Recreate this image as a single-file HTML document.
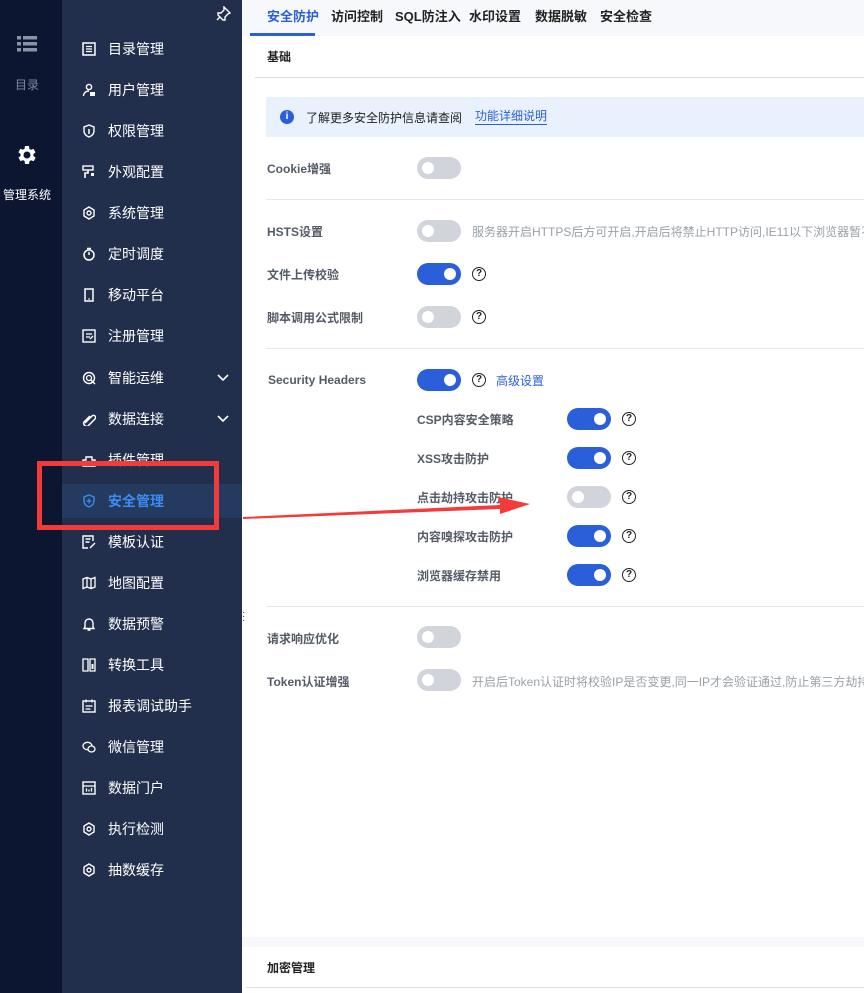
<!DOCTYPE html>
<html><head><meta charset="utf-8"><style>
*{margin:0;padding:0;box-sizing:border-box}
body{width:864px;height:993px;position:relative;overflow:hidden;background:#fff;font-family:"Liberation Sans","Noto Sans CJK SC",sans-serif;}
.a{position:absolute;white-space:nowrap}
#rail{left:0;top:0;width:62px;height:993px;background:#0c1631}
#side{left:62px;top:0;width:180px;height:993px;background:#222f4c}
.mi{position:absolute;left:62px;width:180px;height:34px;color:#fff;font-size:14px;line-height:34px}
.mi span{position:absolute;left:46px}
.mi svg{position:absolute;left:20px;top:10px}
.tab{position:absolute;top:0;height:34px;line-height:34px;font-size:13px;font-weight:bold;color:#222;white-space:nowrap}
.lbl{position:absolute;font-size:12px;font-weight:bold;color:#555b66;line-height:16px;white-space:nowrap}
.sw{position:absolute;width:44px;height:22px;border-radius:11px;background:#d1d4da}
.sw:after{content:"";position:absolute;left:5px;top:5px;width:12px;height:12px;border-radius:50%;background:#fff}
.sw.on{background:#2b5fd9}
.sw.on:after{left:27px}
.q{position:absolute;width:14px;height:14px;border:1.3px solid #222;border-radius:50%;font-size:10px;font-weight:bold;line-height:12px;text-align:center;color:#222}
.hr{position:absolute;height:1px;background:#e6e8ee}
.desc{position:absolute;font-size:12px;color:#9aa0a8;line-height:16px;white-space:nowrap;overflow:hidden;right:0}
</style></head><body>
<div class="a" id="rail"></div>
<div class="a" id="side"></div>
<svg class="a" style="left:17px;top:36px" width="20" height="16"><g fill="#8a93a6"><rect x="0" y="0" width="4" height="3.5"/><rect x="6" y="0" width="14" height="3.5"/><rect x="0" y="6" width="4" height="3.5"/><rect x="6" y="6" width="14" height="3.5"/><rect x="0" y="12" width="4" height="3.5"/><rect x="6" y="12" width="14" height="3.5"/></g></svg>
<div class="a" style="left:15px;top:76px;font-size:12px;color:#7e879a">目录</div>
<svg class="a" style="left:15px;top:143px" width="24" height="24" viewBox="0 0 24 24"><path fill="#fff" fill-rule="evenodd" d="M19.4 13a7.5 7.5 0 000-2l2.1-1.6-2-3.5-2.5 1a7 7 0 00-1.7-1L15 3h-4l-.4 2.7a7 7 0 00-1.7 1l-2.5-1-2 3.5L6.6 11a7.5 7.5 0 000 2l-2.1 1.6 2 3.5 2.5-1a7 7 0 001.7 1L11 21h4l.4-2.7a7 7 0 001.7-1l2.5 1 2-3.5zM13 15.5a3.5 3.5 0 110-7 3.5 3.5 0 010 7z" transform="translate(-1 0)"/></svg>
<div class="a" style="left:3px;top:186px;font-size:12px;color:#fff">管理系统</div>
<svg class="a" style="left:215px;top:6px" width="16" height="16" viewBox="0 0 16 16"><path d="M9 1l6 6-2 1-3 3 0 3-2 0-5-5 0-2 3 0 3-3zM2 14l3-3" stroke="#fff" stroke-width="1.4" fill="none"/></svg>
<div class="a" style="left:62px;top:484px;width:180px;height:34px;background:#243a5f"></div>

<div class="mi" style="top:32px"><svg width="14" height="14"><rect x="1" y="1" width="12" height="12" fill="none" stroke="#fff" stroke-width="1.5"/><path d="M4 4.5h6M4 7h6M4 9.5h6" stroke="#fff" stroke-width="1.3"/></svg><span>目录管理</span></div>
<div class="mi" style="top:73px"><svg width="14" height="14"><circle cx="7" cy="4" r="2.6" fill="none" stroke="#fff" stroke-width="1.4"/><path d="M1.5 13c0-3 2.5-5 5.5-5" stroke="#fff" stroke-width="1.4" fill="none"/><rect x="8" y="9" width="5" height="4" fill="#fff"/></svg><span>用户管理</span></div>
<div class="mi" style="top:114px"><svg width="14" height="14"><path d="M7 1l5 2v4c0 3-2.5 5-5 6-2.5-1-5-3-5-6V3z" fill="none" stroke="#fff" stroke-width="1.4"/><path d="M7 5v5" stroke="#fff" stroke-width="1.5"/></svg><span>权限管理</span></div>
<div class="mi" style="top:155px"><svg width="14" height="14"><rect x="1" y="1" width="10" height="4" fill="none" stroke="#fff" stroke-width="1.4"/><path d="M6 5v3H3v5" stroke="#fff" stroke-width="1.6" fill="none"/><rect x="9" y="8" width="3" height="3" fill="#fff"/></svg><span>外观配置</span></div>
<div class="mi" style="top:196px"><svg width="14" height="14" viewBox="0 0 14 14"><path d="M7 1l5 3v6l-5 3-5-3V4z" fill="none" stroke="#fff" stroke-width="1.4"/><circle cx="7" cy="7" r="2" fill="none" stroke="#fff" stroke-width="1.4"/></svg><span>系统管理</span></div>
<div class="mi" style="top:237px"><svg width="14" height="14"><circle cx="7" cy="8" r="5" fill="none" stroke="#fff" stroke-width="1.5"/><path d="M5 1.5h4M7 5v3" stroke="#fff" stroke-width="1.5"/></svg><span>定时调度</span></div>
<div class="mi" style="top:278px"><svg width="14" height="14"><rect x="3" y="1" width="8" height="12" fill="none" stroke="#fff" stroke-width="1.5"/><path d="M6 11h2" stroke="#fff"/></svg><span>移动平台</span></div>
<div class="mi" style="top:319px"><svg width="14" height="14"><rect x="1" y="1" width="12" height="12" fill="none" stroke="#fff" stroke-width="1.4"/><path d="M4 5h6M4 8h4M8 10l3-3" stroke="#fff" stroke-width="1.3"/></svg><span>注册管理</span></div>
<div class="mi" style="top:361px"><svg width="14" height="14"><circle cx="7" cy="7" r="5.5" fill="none" stroke="#fff" stroke-width="1.4"/><circle cx="7" cy="7" r="2.5" fill="none" stroke="#fff" stroke-width="1.3"/><path d="M9 9l4 4" stroke="#fff" stroke-width="1.5"/></svg><span>智能运维</span><svg style="left:154px;top:12px" width="14" height="10"><path d="M2 2l5 5 5-5" stroke="#fff" stroke-width="1.6" fill="none"/></svg></div>
<div class="mi" style="top:402px"><svg width="14" height="14"><path d="M3 11l7-7a2 2 0 013 3l-7 7a3 3 0 01-4-4l6-6" stroke="#fff" stroke-width="1.5" fill="none"/></svg><span>数据连接</span><svg style="left:154px;top:12px" width="14" height="10"><path d="M2 2l5 5 5-5" stroke="#fff" stroke-width="1.6" fill="none"/></svg></div>
<div class="mi" style="top:443px"><svg width="14" height="14"><path d="M4 4h6v3h3v6H1V7h3z" fill="none" stroke="#fff" stroke-width="1.4"/></svg><span>插件管理</span></div>
<div class="mi" style="top:484px;color:#3d8bf2"><svg width="14" height="14"><path d="M7 1l5 2v4c0 3-2.5 5-5 6-2.5-1-5-3-5-6V3z" fill="none" stroke="#3d8bf2" stroke-width="1.4"/><path d="M7 4.5v5M4.5 7h5" stroke="#3d8bf2" stroke-width="1.3"/></svg><span style="font-weight:bold">安全管理</span></div>
<div class="mi" style="top:525px"><svg width="14" height="14"><path d="M11 6V1H1v12h5" fill="none" stroke="#fff" stroke-width="1.4"/><path d="M3.5 4h5M3.5 7h4M8 13l5-5" stroke="#fff" stroke-width="1.4"/></svg><span>模板认证</span></div>
<div class="mi" style="top:566px"><svg width="14" height="14"><path d="M1 3l4-1.5 4 1.5 4-1.5V11l-4 1.5-4-1.5-4 1.5zM5 1.5V11M9 3v9.5" fill="none" stroke="#fff" stroke-width="1.3"/></svg><span>地图配置</span></div>
<div class="mi" style="top:607px"><svg width="14" height="14"><path d="M3 10V6a4 4 0 018 0v4l1 1.5H2zM5.5 13h3" fill="none" stroke="#fff" stroke-width="1.4"/></svg><span>数据预警</span></div>
<div class="mi" style="top:648px"><svg width="14" height="14"><path d="M1 1h5v12H1zM8 1h5v12H8z" fill="none" stroke="#fff" stroke-width="1.3"/><path d="M9.5 6h2v5h-2z" fill="#fff"/></svg><span>转换工具</span></div>
<div class="mi" style="top:689px"><svg width="14" height="14"><rect x="1" y="2" width="12" height="11" fill="none" stroke="#fff" stroke-width="1.4"/><path d="M4 0.5v3M10 0.5v3M3.5 7h7M3.5 10h5" stroke="#fff" stroke-width="1.3"/></svg><span>报表调试助手</span></div>
<div class="mi" style="top:730px"><svg width="14" height="14"><ellipse cx="5.5" cy="6" rx="4.5" ry="3.7" fill="none" stroke="#fff" stroke-width="1.3"/><ellipse cx="9.5" cy="9" rx="3.5" ry="3" fill="#222f4c" stroke="#fff" stroke-width="1.3"/></svg><span>微信管理</span></div>
<div class="mi" style="top:771px"><svg width="14" height="14"><rect x="1" y="1" width="12" height="12" fill="none" stroke="#fff" stroke-width="1.4"/><path d="M1 5h12M4.5 7.5v3M7 8.5v2M9.5 7v3.5" stroke="#fff" stroke-width="1.3"/></svg><span>数据门户</span></div>
<div class="mi" style="top:812px"><svg width="14" height="14"><path d="M7 1l5 3v6l-5 3-5-3V4z" fill="none" stroke="#fff" stroke-width="1.4"/><circle cx="7" cy="7" r="2" fill="none" stroke="#fff" stroke-width="1.4"/></svg><span>执行检测</span></div>
<div class="mi" style="top:853px"><svg width="14" height="14"><path d="M7 1l5 3v6l-5 3-5-3V4z" fill="none" stroke="#fff" stroke-width="1.4"/><circle cx="7" cy="7" r="2" fill="none" stroke="#fff" stroke-width="1.4"/></svg><span>抽数缓存</span></div>
<div class="a" style="left:242px;top:611px;font-size:10px;color:#333;line-height:4px">·<br>·<br>·</div>

<div class="a" style="left:242px;top:0;width:622px;height:36px;background:#f6f8fb"></div>
<div class="tab" style="left:267px;color:#2b5fd9">安全防护</div>
<div class="a" style="left:250px;top:33px;width:65px;height:3px;background:#2b5fd9"></div>
<div class="tab" style="left:331px">访问控制</div>
<div class="tab" style="left:395px">SQL防注入</div>
<div class="tab" style="left:469px">水印设置</div>
<div class="tab" style="left:535px">数据脱敏</div>
<div class="tab" style="left:600px">安全检查</div>
<div class="a" style="left:267px;top:48px;font-size:12px;font-weight:bold;color:#222">基础</div>
<div class="hr" style="left:255px;top:77px;width:609px;background:#dcdee3"></div>
<div class="a" style="left:266px;top:97px;width:598px;height:40px;background:#e9f1fc"></div>
<div class="a" style="left:280px;top:110px;width:14px;height:14px;border-radius:50%;background:#2b5fd9;color:#fff;font-size:10px;font-weight:bold;text-align:center;line-height:14px">i</div>
<div class="a" style="left:306px;top:109px;font-size:12px;color:#222">了解更多安全防护信息请查阅</div>
<div class="a" style="left:475px;top:109px;font-size:12px;color:#2b5fd9;border-bottom:1px solid #2b5fd9;line-height:15px">功能详细说明</div>

<div class="lbl" style="left:267px;top:161px">Cookie增强</div><div class="sw" style="left:417px;top:157px"></div>
<div class="hr" style="left:266px;top:199px;width:598px"></div>
<div class="lbl" style="left:267px;top:224px">HSTS设置</div><div class="sw" style="left:417px;top:220px"></div>
<div class="desc" style="left:472px;top:224px">服务器开启HTTPS后方可开启,开启后将禁止HTTP访问,IE11以下浏览器暂不</div>
<div class="lbl" style="left:267px;top:267px">文件上传校验</div><div class="sw on" style="left:417px;top:263px"></div><div class="q" style="left:472px;top:267px">?</div>
<div class="lbl" style="left:267px;top:310px">脚本调用公式限制</div><div class="sw" style="left:417px;top:306px"></div><div class="q" style="left:472px;top:310px">?</div>
<div class="hr" style="left:266px;top:348px;width:598px"></div>
<div class="lbl" style="left:268px;top:372px">Security Headers</div><div class="sw on" style="left:417px;top:369px"></div><div class="q" style="left:472px;top:373px">?</div>
<div class="a" style="left:496px;top:372px;font-size:12px;color:#2b5fd9">高级设置</div>
<div class="lbl" style="left:417px;top:412px">CSP内容安全策略</div><div class="sw on" style="left:567px;top:408px"></div><div class="q" style="left:622px;top:412px">?</div>
<div class="lbl" style="left:417px;top:451px">XSS攻击防护</div><div class="sw on" style="left:567px;top:447px"></div><div class="q" style="left:622px;top:451px">?</div>
<div class="lbl" style="left:417px;top:490px">点击劫持攻击防护</div><div class="sw" style="left:567px;top:486px"></div><div class="q" style="left:622px;top:490px">?</div>
<div class="lbl" style="left:417px;top:529px">内容嗅探攻击防护</div><div class="sw on" style="left:567px;top:525px"></div><div class="q" style="left:622px;top:529px">?</div>
<div class="lbl" style="left:417px;top:568px">浏览器缓存禁用</div><div class="sw on" style="left:567px;top:564px"></div><div class="q" style="left:622px;top:568px">?</div>
<div class="hr" style="left:266px;top:606px;width:598px"></div>
<div class="lbl" style="left:267px;top:631px">请求响应优化</div><div class="sw" style="left:417px;top:626px"></div>
<div class="lbl" style="left:267px;top:674px">Token认证增强</div><div class="sw" style="left:417px;top:669px"></div>
<div class="desc" style="left:472px;top:674px">开启后Token认证时将校验IP是否变更,同一IP才会验证通过,防止第三方劫持</div>

<div class="a" style="left:242px;top:937px;width:622px;height:10px;background:#f6f8fb"></div>
<div class="a" style="left:267px;top:959px;font-size:12px;font-weight:bold;color:#222">加密管理</div>
<div class="hr" style="left:246px;top:987px;width:618px;background:#dcdee3"></div>

<div class="a" style="left:37px;top:461px;width:182px;height:69px;border:5px solid #f53a3a"></div>
<svg class="a" style="left:0;top:0" width="864" height="993"><polygon points="243,517 500,505 498,497 530,504 500,514 500,509 243,519" fill="#f53a3a"/></svg>
</body></html>
